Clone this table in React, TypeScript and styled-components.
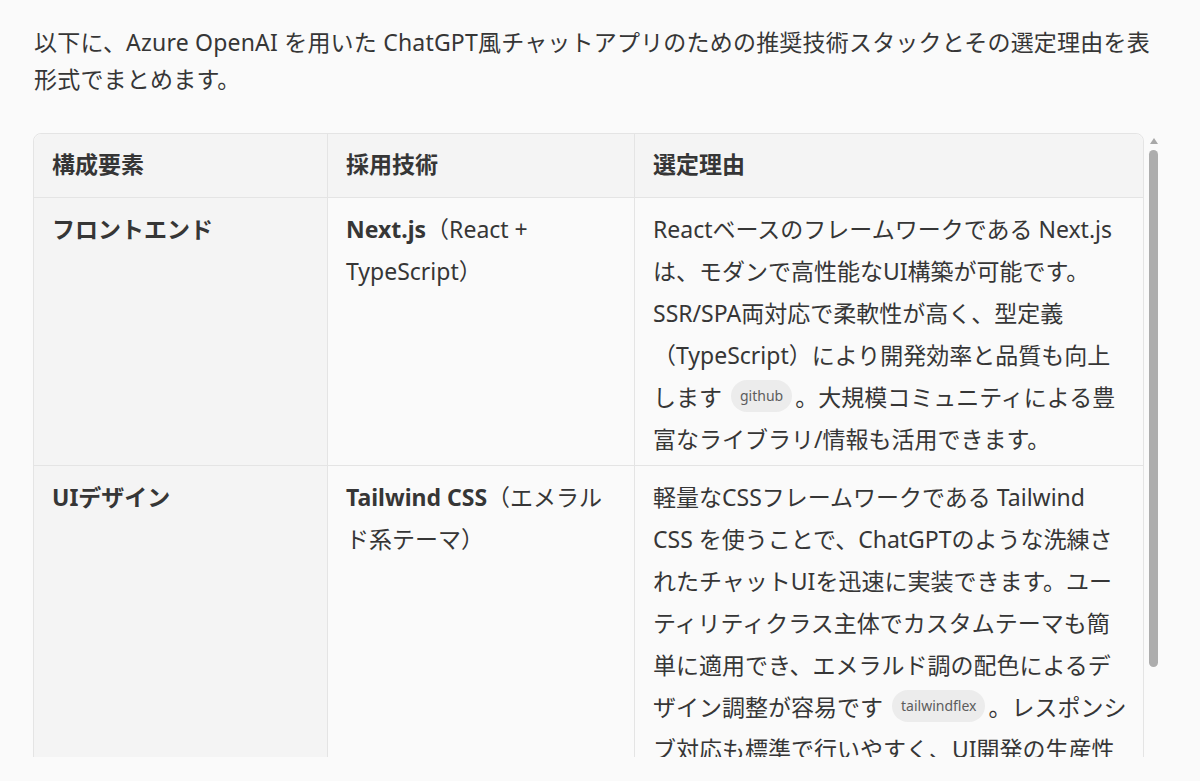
import React from "react";
import styled, { createGlobalStyle } from "styled-components";

const GlobalStyle = createGlobalStyle`
  html, body {
    margin: 0;
    padding: 0;
    background: #fafafa;
  }
  body {
    font-family: "Noto Sans", "Noto Sans CJK JP", sans-serif;
    color: #363636;
  }
`;

const Page = styled.div`
  padding: 24px 32px 0 33px;
  height: 781px;
  box-sizing: border-box;
  overflow: hidden;
`;

const Intro = styled.p`
  margin: 0 0 0 1px;
  font-size: 23px;
  letter-spacing: 0.2px;
  line-height: 37px;
  color: #363636;
  white-space: nowrap;
`;

const ScrollFrame = styled.div`
  margin-top: 35px;
  display: flex;
  align-items: flex-start;
  height: 624px;
`;

const ScrollArea = styled.div`
  width: 1111px;
  max-height: 624px;
  overflow-y: auto;
  overflow-x: hidden;
  scrollbar-width: none;
  &::-webkit-scrollbar {
    display: none;
  }
`;

const ScrollRail = styled.div`
  width: 19px;
  display: flex;
  flex-direction: column;
  align-items: center;
`;

const RailArrow = styled.div`
  width: 0;
  height: 0;
  margin-top: 5px;
  border-left: 4px solid transparent;
  border-right: 4px solid transparent;
  border-bottom: 6px solid #a8a8a8;
`;

const RailThumb = styled.div<{ $size: number }>`
  margin-top: 6px;
  width: 9px;
  height: ${(p) => p.$size}px;
  border-radius: 5px;
  background: #adadad;
`;

const Table = styled.table`
  width: 1111px;
  table-layout: fixed;
  border-collapse: separate;
  border-spacing: 0;
  border: 1px solid #e4e4e4;
  border-radius: 8px;
  margin-bottom: 28px;
`;

const Col = styled.col<{ $w?: number }>`
  width: ${(p) => (p.$w ? `${p.$w}px` : "auto")};
`;

const HeadCell = styled.th<{ $last?: boolean; $first?: boolean }>`
  background: #f4f4f4;
  text-align: left;
  font-weight: 700;
  font-size: 23px;
  line-height: 42px;
  color: #363636;
  padding: 9px 18px 12px;
  border-bottom: 1px solid #e4e4e4;
  border-right: ${(p) => (p.$last ? "none" : "1px solid #e4e4e4")};
  border-top-left-radius: ${(p) => (p.$first ? "8px" : "0")};
  border-top-right-radius: ${(p) => (p.$last ? "8px" : "0")};
`;

const Cell = styled.td<{ $label?: boolean; $last?: boolean; $lastRow?: boolean }>`
  vertical-align: top;
  font-size: 23px;
  line-height: 42px;
  padding: 10px 18px 5px;
  color: #363636;
  white-space: nowrap;
  background: ${(p) => (p.$label ? "#f4f4f4" : "transparent")};
  font-weight: ${(p) => (p.$label ? 700 : 400)};
  border-right: ${(p) => (p.$last ? "none" : "1px solid #e4e4e4")};
  border-bottom: ${(p) => (p.$lastRow ? "none" : "1px solid #e4e4e4")};
`;

const Strong = styled.strong`
  font-weight: 700;
`;

const Chip = styled.span`
  display: inline-block;
  vertical-align: 5px;
  font-size: 14px;
  letter-spacing: 0;
  line-height: 32px;
  height: 32px;
  padding: 0 9px;
  margin: 0 3px 0 9px;
  border-radius: 16px;
  background: #ececec;
  color: #5d5d5d;
`;

export default function App() {
  return (
    <>
      <GlobalStyle />
      <Page>
        <Intro>
          以下に、Azure OpenAI を用いた ChatGPT風チャットアプリのための推奨技術スタックとその選定理由を表
          <br />
          形式でまとめます。
        </Intro>
        <ScrollFrame>
          <ScrollArea>
            <Table>
              <colgroup>
                <Col $w={294} />
                <Col $w={307} />
                <Col />
              </colgroup>
              <thead>
                <tr>
                  <HeadCell $first>構成要素</HeadCell>
                  <HeadCell>採用技術</HeadCell>
                  <HeadCell $last>選定理由</HeadCell>
                </tr>
              </thead>
              <tbody>
                <tr>
                  <Cell $label>フロントエンド</Cell>
                  <Cell>
                    <Strong>Next.js</Strong>（React +
                    <br />
                    TypeScript）
                  </Cell>
                  <Cell $last>
                    Reactベースのフレームワークである Next.js
                    <br />
                    は、モダンで高性能なUI構築が可能です。
                    <br />
                    SSR/SPA両対応で柔軟性が高く、型定義
                    <br />
                    （TypeScript）により開発効率と品質も向上
                    <br />
                    します<Chip>github</Chip>。大規模コミュニティによる豊
                    <br />
                    富なライブラリ/情報も活用できます。
                  </Cell>
                </tr>
                <tr>
                  <Cell $label $lastRow>
                    UIデザイン
                  </Cell>
                  <Cell $lastRow>
                    <Strong>Tailwind CSS</Strong>（エメラル
                    <br />
                    ド系テーマ）
                  </Cell>
                  <Cell $last $lastRow>
                    軽量なCSSフレームワークである Tailwind
                    <br />
                    CSS を使うことで、ChatGPTのような洗練さ
                    <br />
                    れたチャットUIを迅速に実装できます。ユー
                    <br />
                    ティリティクラス主体でカスタムテーマも簡
                    <br />
                    単に適用でき、エメラルド調の配色によるデ
                    <br />
                    ザイン調整が容易です<Chip>tailwindflex</Chip>。レスポンシ
                    <br />
                    ブ対応も標準で行いやすく、UI開発の生産性
                    <br />
                    を高めます。
                  </Cell>
                </tr>
              </tbody>
            </Table>
          </ScrollArea>
          <ScrollRail>
            <RailArrow />
            <RailThumb $size={517} />
          </ScrollRail>
        </ScrollFrame>
      </Page>
    </>
  );
}
